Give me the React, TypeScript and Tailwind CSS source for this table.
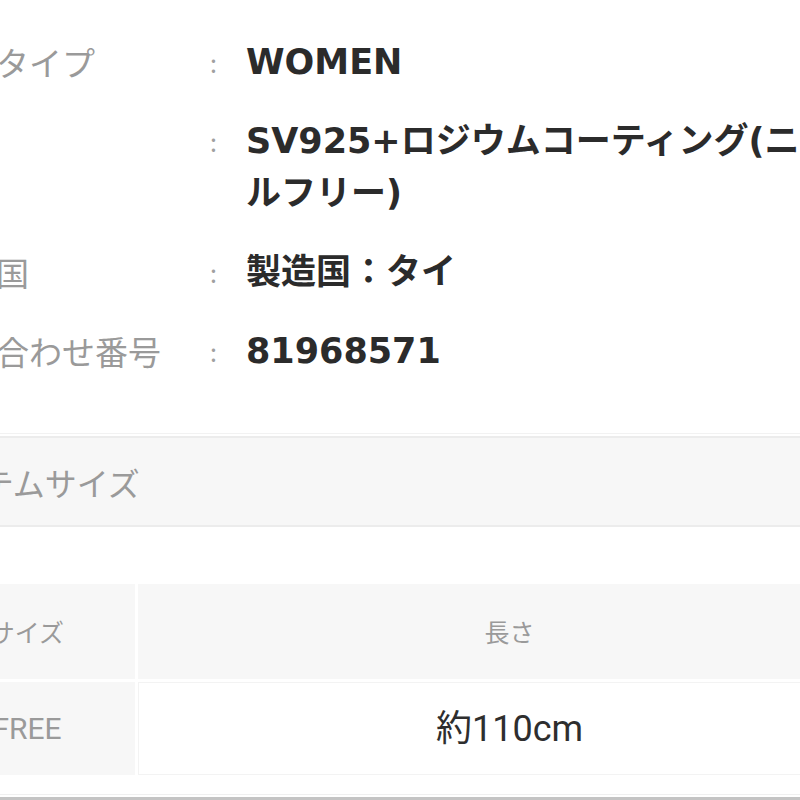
const jp = { fontFamily: '"Noto Sans CJK JP", sans-serif' }

type Spec = {
  label: string
  value: string
}

const specs: Spec[] = [
  { label: '商品タイプ', value: 'WOMEN' },
  { label: '素材', value: 'SV925+ロジウムコーティング(ニッケルフリー)' },
  { label: '原産国', value: '製造国：タイ' },
  { label: '問い合わせ番号', value: '81968571' },
]

const SpecRow = ({ label, value }: Spec) => (
  <div className="flex">
    <div className="w-[280px] shrink-0 text-[33px] leading-[52px] text-[#9a9a9a] whitespace-nowrap" style={jp}>
      {label}
    </div>
    <div className="w-[36px] shrink-0 text-[25px] leading-[52px] text-[#a0a0a0]" style={jp}>
      :
    </div>
    <div
      className="w-[635px] text-[35px] leading-[52px] font-bold text-[#2b2b2b]"
      style={{ fontFamily: '"DejaVu Sans", "Noto Sans CJK JP", sans-serif' }}
    >
      {value}
    </div>
  </div>
)

const App = () => {
  return (
    <div className="w-[800px] h-[800px] overflow-hidden bg-white">
      <div className="-ml-[89px] w-[970px] flex flex-col">
        <div className="pt-[36px] pl-[19px] flex flex-col gap-[27px]">
          {specs.map((s) => (
            <SpecRow key={s.label} {...s} />
          ))}
        </div>

        <div className="mt-[56px] border-t border-[#f2f2f2] pt-[2px]">
          <div className="h-[91px] bg-[#f7f7f7] border-t-2 border-b-2 border-[#ececec] flex items-center pl-[9px]">
            <span className="text-[32px] text-[#9a9a9a]" style={jp}>
              アイテムサイズ
            </span>
          </div>
        </div>

        <div className="mt-[57px] ml-[8px] grid grid-cols-[216px_743px] gap-[3px]">
          <div className="h-[95px] bg-[#f7f7f7] flex items-center justify-center text-[25px] text-[#9a9a9a]" style={jp}>
            サイズ
          </div>
          <div className="h-[95px] bg-[#f7f7f7] flex items-center justify-center text-[25px] text-[#9a9a9a]" style={jp}>
            長さ
          </div>
          <div
            className="h-[93px] bg-[#f7f7f7] flex items-center justify-center text-[30px] text-[#9a9a9a]"
            style={{ fontFamily: 'Roboto, "Noto Sans CJK JP", sans-serif' }}
          >
            FREE
          </div>
          <div
            className="h-[93px] bg-white border border-[#f3f3f3] flex items-center justify-center text-[36px] text-[#2e2e2e]"
            style={{ fontFamily: 'Roboto, "Noto Sans CJK JP", sans-serif' }}
          >
            約110cm
          </div>
        </div>

        <div className="mt-[19px] border-t border-[#f0f0f0]" />
        <div className="mt-[2px] h-[4px] bg-[#c4c4c4]" />
      </div>
    </div>
  )
}

export default App
